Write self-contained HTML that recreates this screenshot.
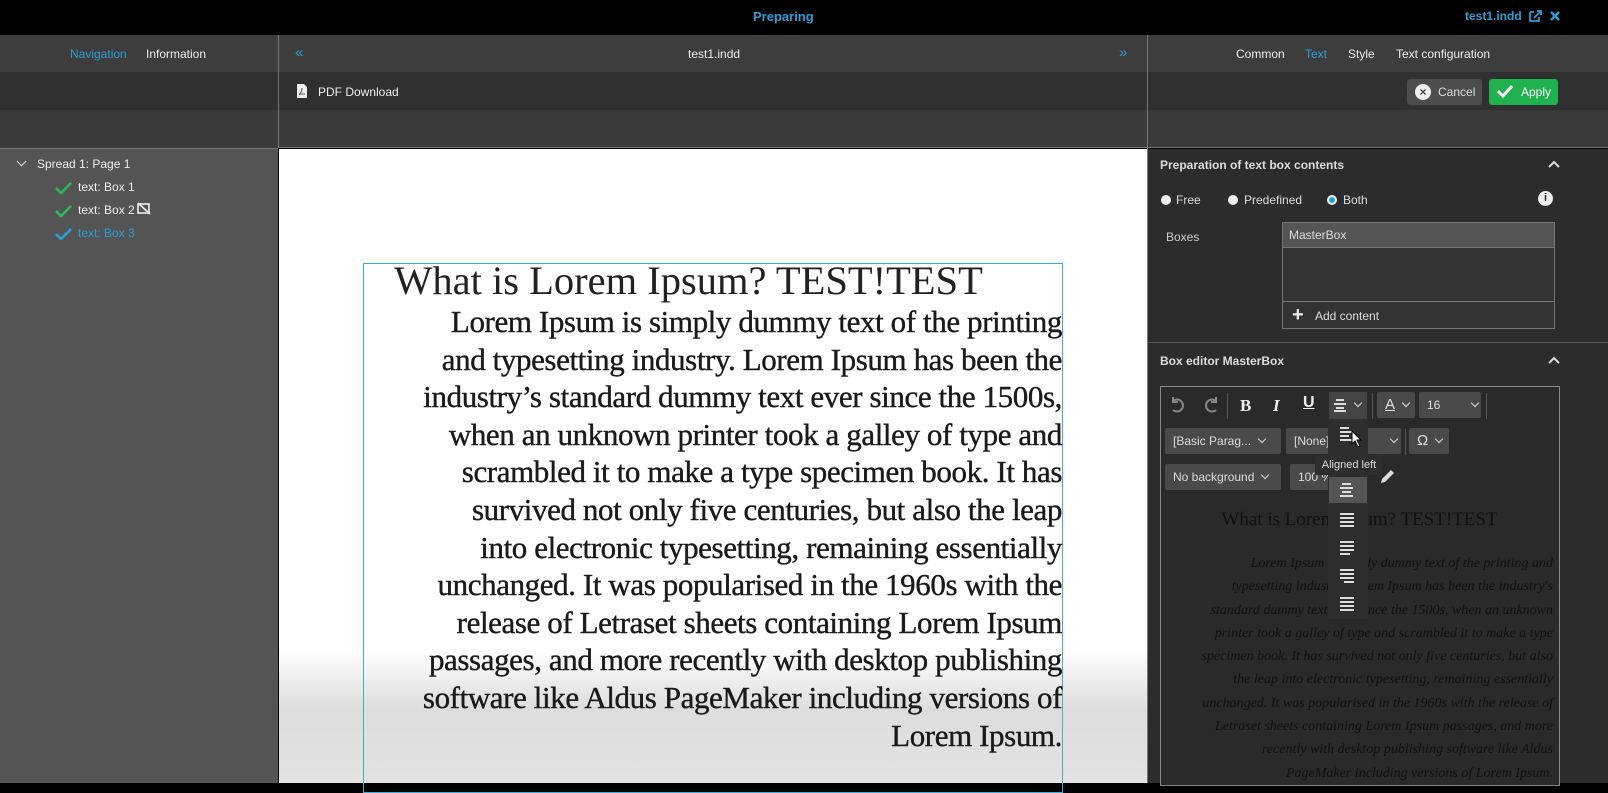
<!DOCTYPE html>
<html><head><meta charset="utf-8"><style>
*{box-sizing:border-box;margin:0;padding:0}
body{width:1608px;height:783px;overflow:hidden;background:#000;font-family:"Liberation Sans",sans-serif;font-size:12px;color:#eee;position:relative}
.a{position:absolute}
.blue{color:#2a9fd8}
.dd::after{content:"";display:inline-block;width:5px;height:5px;border-right:1.5px solid #ddd;border-bottom:1.5px solid #ddd;transform:rotate(45deg);margin-left:8px;position:relative;top:-3px}
.btn{background:#4a4a4a;border-radius:2px;height:26px;line-height:26px;padding-left:8px;color:#ddd}
</style></head><body>
<div class="a" style="left:0;top:0;width:1608px;height:34px;background:#000"></div>
<div class="a blue" style="left:753px;top:9px;font-size:13px;font-weight:bold">Preparing</div>
<div class="a blue" style="left:1465px;top:9px;font-weight:bold">test1.indd</div>
<svg class="a" style="left:1528px;top:9px" width="34" height="14"><path d="M2 3h4M2 3v9h9v-4M6 9l7-7M9 2h4v4" stroke="#2a9fd8" stroke-width="1.8" fill="none"/><path d="M23 3l8 8M31 3l-8 8" stroke="#2a9fd8" stroke-width="2.4"/></svg>

<!-- left -->
<div class="a" style="left:0;top:35px;width:278px;height:37px;background:#3d3d3d"></div>
<div class="a" style="left:0;top:72px;width:278px;height:38px;background:#303030"></div>
<div class="a" style="left:0;top:110px;width:278px;height:38px;background:#3a3a3a"></div>
<div class="a" style="left:0;top:148px;width:278px;height:635px;background:#545454;border-top:1px solid #777"></div>
<div class="a blue" style="left:70px;top:47px">Navigation</div>
<div class="a" style="left:146px;top:47px">Information</div>
<div class="a" style="left:18px;top:158px;width:7px;height:7px;border-right:1.5px solid #ddd;border-bottom:1.5px solid #ddd;transform:rotate(45deg)"></div>
<div class="a" style="left:37px;top:157px">Spread 1: Page 1</div>
<svg class="a" style="left:55px;top:180px" width="18" height="60"><path d="M1 8l5 5 10-10M1 31l5 5 10-10" stroke="#2eb85c" stroke-width="2.6" fill="none"/><path d="M1 54l5 5 10-10" stroke="#2a9fd8" stroke-width="2.6" fill="none"/></svg>
<div class="a" style="left:78px;top:180px">text: Box 1</div>
<div class="a" style="left:78px;top:203px">text: Box 2</div>
<svg class="a" style="left:137px;top:202px" width="14" height="13"><rect x="1" y="2" width="11" height="9" fill="none" stroke="#eee" stroke-width="1.6"/><path d="M1 1l12 11" stroke="#eee" stroke-width="1.8"/></svg>
<div class="a blue" style="left:78px;top:226px">text: Box 3</div>

<!-- center -->
<div class="a" style="left:278px;top:35px;width:1px;height:113px;background:#777"></div>
<div class="a" style="left:279px;top:35px;width:868px;height:37px;background:#3d3d3d"></div>
<div class="a" style="left:279px;top:72px;width:868px;height:38px;background:#303030"></div>
<div class="a" style="left:279px;top:110px;width:868px;height:38px;background:#3a3a3a;border-bottom:1px solid #777"></div>
<div class="a blue" style="left:295px;top:44px;font-size:15px">«</div>
<div class="a blue" style="left:1119px;top:44px;font-size:15px">»</div>
<div class="a" style="left:688px;top:47px">test1.indd</div>
<svg class="a" style="left:296px;top:83px" width="12" height="16"><path d="M1 1h7l3 3v11H1z" fill="#eee"/><path d="M3 12c2-2 3-5 3-7M4 11h5" stroke="#555" stroke-width="1" fill="none"/></svg>
<div class="a" style="left:318px;top:85px">PDF Download</div>
<div class="a" style="left:279px;top:149px;width:868px;height:634px;background:linear-gradient(#fff 0,#fff 500px,#ddd 560px,#e2e2e2 634px)"></div>
<div class="a" style="left:363px;top:263px;width:700px;height:530px;border:1px solid #3ab0d8"></div>
<div class="a" style="left:365px;top:257px;width:697px;text-align:center;padding-right:50px;font-family:'Liberation Serif',serif;font-size:40.5px;color:#222;white-space:nowrap">What is Lorem Ipsum? TEST!TEST</div>
<div class="a" style="left:330px;top:303px;width:732px;text-align:right;font-family:'Liberation Serif',serif;font-size:31px;line-height:37.6px;color:#1a1a1a;white-space:nowrap;letter-spacing:-0.4px;-webkit-text-stroke:0.4px #1a1a1a">Lorem Ipsum is simply dummy text of the printing<br>and typesetting industry. Lorem Ipsum has been the<br>industry’s standard dummy text ever since the 1500s,<br>when an unknown printer took a galley of type and<br>scrambled it to make a type specimen book. It has<br>survived not only five centuries, but also the leap<br>into electronic typesetting, remaining essentially<br>unchanged. It was popularised in the 1960s with the<br>release of Letraset sheets containing Lorem Ipsum<br>passages, and more recently with desktop publishing<br>software like Aldus PageMaker including versions of<br>Lorem Ipsum.</div>

<!-- right -->
<div class="a" style="left:1147px;top:35px;width:1px;height:748px;background:#777"></div>
<div class="a" style="left:1148px;top:35px;width:460px;height:37px;background:#3d3d3d"></div>
<div class="a" style="left:1148px;top:72px;width:460px;height:38px;background:#303030"></div>
<div class="a" style="left:1148px;top:110px;width:460px;height:38px;background:#3a3a3a;border-bottom:1px solid #777"></div>
<div class="a" style="left:1236px;top:47px">Common</div>
<div class="a blue" style="left:1305px;top:47px">Text</div>
<div class="a" style="left:1348px;top:47px">Style</div>
<div class="a" style="left:1396px;top:47px">Text configuration</div>
<div class="a" style="left:1407px;top:79px;width:75px;height:26px;background:#4d4d4d;border-radius:3px"></div>
<div class="a" style="left:1415px;top:84px;width:16px;height:16px;border-radius:50%;background:#eee;color:#444;font-size:12px;font-weight:bold;text-align:center;line-height:16px">×</div>
<div class="a" style="left:1438px;top:85px;color:#ddd">Cancel</div>
<div class="a" style="left:1489px;top:79px;width:69px;height:26px;background:#1fb14d;border-radius:3px"></div>
<svg class="a" style="left:1496px;top:84px" width="18" height="15"><path d="M2 7l5 5 9-10" stroke="#fff" stroke-width="3" fill="none"/></svg>
<div class="a" style="left:1521px;top:85px;color:#fff">Apply</div>

<div class="a" style="left:1148px;top:149px;width:460px;height:634px;background:#2c2c2c"></div>
<div class="a" style="left:1160px;top:158px;font-weight:bold;color:#ddd">Preparation of text box contents</div>
<svg class="a" style="left:1548px;top:160px" width="12" height="8"><path d="M1 7l5-5 5 5" stroke="#ddd" stroke-width="2" fill="none"/></svg>
<div class="a" style="left:1161px;top:195px;width:10px;height:10px;border-radius:50%;background:#eee"></div>
<div class="a" style="left:1176px;top:193px;color:#ddd">Free</div>
<div class="a" style="left:1228px;top:195px;width:10px;height:10px;border-radius:50%;background:#eee"></div>
<div class="a" style="left:1244px;top:193px;color:#ddd">Predefined</div>
<div class="a" style="left:1327px;top:195px;width:10px;height:10px;border-radius:50%;background:#2a9fd8;border:2px solid #eee"></div>
<div class="a" style="left:1343px;top:193px;color:#ddd">Both</div>
<div class="a" style="left:1538px;top:191px;width:15px;height:15px;border-radius:50%;background:#eee;color:#2c2c2c;font-weight:bold;font-size:11px;text-align:center;line-height:15px">i</div>
<div class="a" style="left:1166px;top:230px;color:#ccc">Boxes</div>
<div class="a" style="left:1282px;top:222px;width:273px;height:107px;border:1px solid #777;background:#333"></div>
<div class="a" style="left:1283px;top:223px;width:271px;height:25px;background:#555;border-bottom:1px solid #777;padding:5px 6px;color:#ddd">MasterBox</div>
<div class="a" style="left:1283px;top:301px;width:271px;height:1px;background:#777"></div>
<div class="a" style="left:1292px;top:304px;color:#eee;font-size:20px;font-weight:bold">+</div>
<div class="a" style="left:1315px;top:309px;color:#ddd">Add content</div>
<div class="a" style="left:1148px;top:342px;width:460px;height:1px;background:#555"></div>
<div class="a" style="left:1160px;top:354px;font-weight:bold;color:#ddd">Box editor MasterBox</div>
<svg class="a" style="left:1548px;top:356px" width="12" height="8"><path d="M1 7l5-5 5 5" stroke="#ddd" stroke-width="2" fill="none"/></svg>

<div class="a" style="left:1160px;top:386px;width:400px;height:400px;border:1px solid #888;background:#2a2a2a"></div>
<svg class="a" style="left:1168px;top:396px" width="55" height="20"><path d="M5 5a6 6 0 1 1 0 9M5 1v5h5" stroke="#888" stroke-width="2" fill="none"/><path d="M48 5a6 6 0 1 0 0 9M48 1v5h-5" stroke="#888" stroke-width="2" fill="none"/></svg>
<div class="a" style="left:1227px;top:393px;width:1px;height:26px;background:#555"></div>
<div class="a" style="left:1240px;top:396px;font-size:17px;font-weight:bold;font-family:'Liberation Serif',serif">B</div>
<div class="a" style="left:1273px;top:396px;font-size:17px;font-weight:bold;font-style:italic;font-family:'Liberation Serif',serif">I</div>
<div class="a" style="left:1303px;top:394px;font-size:16px;font-weight:bold;text-decoration:underline">U</div>
<div class="a" style="left:1329px;top:392px;width:38px;height:27px;background:#444"></div>
<svg class="a" style="left:1333px;top:398px" width="14" height="14"><path d="M3 2h8M1 6h12M3 10h8M1 13h12" stroke="#ddd" stroke-width="2"/></svg>
<div class="a dd" style="left:1347px;top:398px"></div>
<div class="a" style="left:1372px;top:393px;width:1px;height:26px;background:#555"></div>
<div class="a btn dd" style="left:1377px;top:392px;width:38px;font-size:15px;text-decoration:underline">A</div>
<div class="a btn dd" style="left:1419px;top:392px;width:62px">16&nbsp;&nbsp;&nbsp;&nbsp;&nbsp;&nbsp;&nbsp;</div>
<div class="a" style="left:1486px;top:393px;width:1px;height:26px;background:#555"></div>
<div class="a btn dd" style="left:1165px;top:428px;width:116px">[Basic Parag...</div>
<div class="a btn" style="left:1286px;top:428px;width:115px">[None]</div>
<div class="a dd" style="left:1383px;top:434px"></div>
<div class="a" style="left:1405px;top:429px;width:1px;height:26px;background:#555"></div>
<div class="a btn dd" style="left:1409px;top:428px;width:40px;font-size:15px">Ω</div>
<div class="a btn dd" style="left:1165px;top:464px;width:116px">No background</div>
<div class="a btn" style="left:1290px;top:464px;width:45px">100 %</div>
<svg class="a" style="left:1378px;top:468px" width="18" height="18"><path d="M3 15l1-4 9-9 3 3-9 9z" fill="#ddd"/></svg>
<div class="a" style="left:1166px;top:509px;width:387px;text-align:center;font-family:'Liberation Serif',serif;font-size:19px;color:#111">What is Lorem Ipsum? TEST!TEST</div>
<div class="a" style="left:1156px;top:552px;width:397px;text-align:right;font-family:'Liberation Serif',serif;font-style:italic;font-size:14px;line-height:23.3px;color:#111;white-space:nowrap">Lorem Ipsum is simply dummy text of the printing and<br>typesetting industry. Lorem Ipsum has been the industry's<br>standard dummy text ever since the 1500s, when an unknown<br>printer took a galley of type and scrambled it to make a type<br>specimen book. It has survived not only five centuries, but also<br>the leap into electronic typesetting, remaining essentially<br>unchanged. It was popularised in the 1960s with the release of<br>Letraset sheets containing Lorem Ipsum passages, and more<br>recently with desktop publishing software like Aldus<br>PageMaker including versions of Lorem Ipsum.</div>
<!-- dropdown -->
<div class="a" style="left:1328px;top:419px;width:40px;height:200px;background:#2e2e2e"></div>
<div class="a" style="left:1329px;top:477px;width:38px;height:26px;background:#555"></div>
<svg class="a" style="left:1339px;top:425px" width="20" height="190"><g stroke="#ddd" stroke-width="2"><path d="M1 3h9M1 7h12M1 11h9M1 15h12"/><path d="M3 59h9M1 63h13M3 67h9M1 71h13"/><path d="M1 89h14M1 93h14M1 97h14M1 101h14"/><path d="M1 117h14M1 121h14M1 125h14M1 129h10"/><path d="M1 145h14M1 149h14M1 153h14M5 157h10"/><path d="M1 173h14M1 177h14M1 181h14M1 185h14"/></g></svg>
<div class="a" style="left:1315px;top:455px;width:68px;height:20px;background:#2e2e2e;font-size:11px;line-height:20px;text-align:center;color:#ddd">Aligned left</div>
<svg class="a" style="left:1351px;top:430px" width="12" height="18"><path d="M1 1v13l3-3 3 6 2-1-3-6h4z" fill="#fff" stroke="#000" stroke-width="1"/></svg>
</body></html>
